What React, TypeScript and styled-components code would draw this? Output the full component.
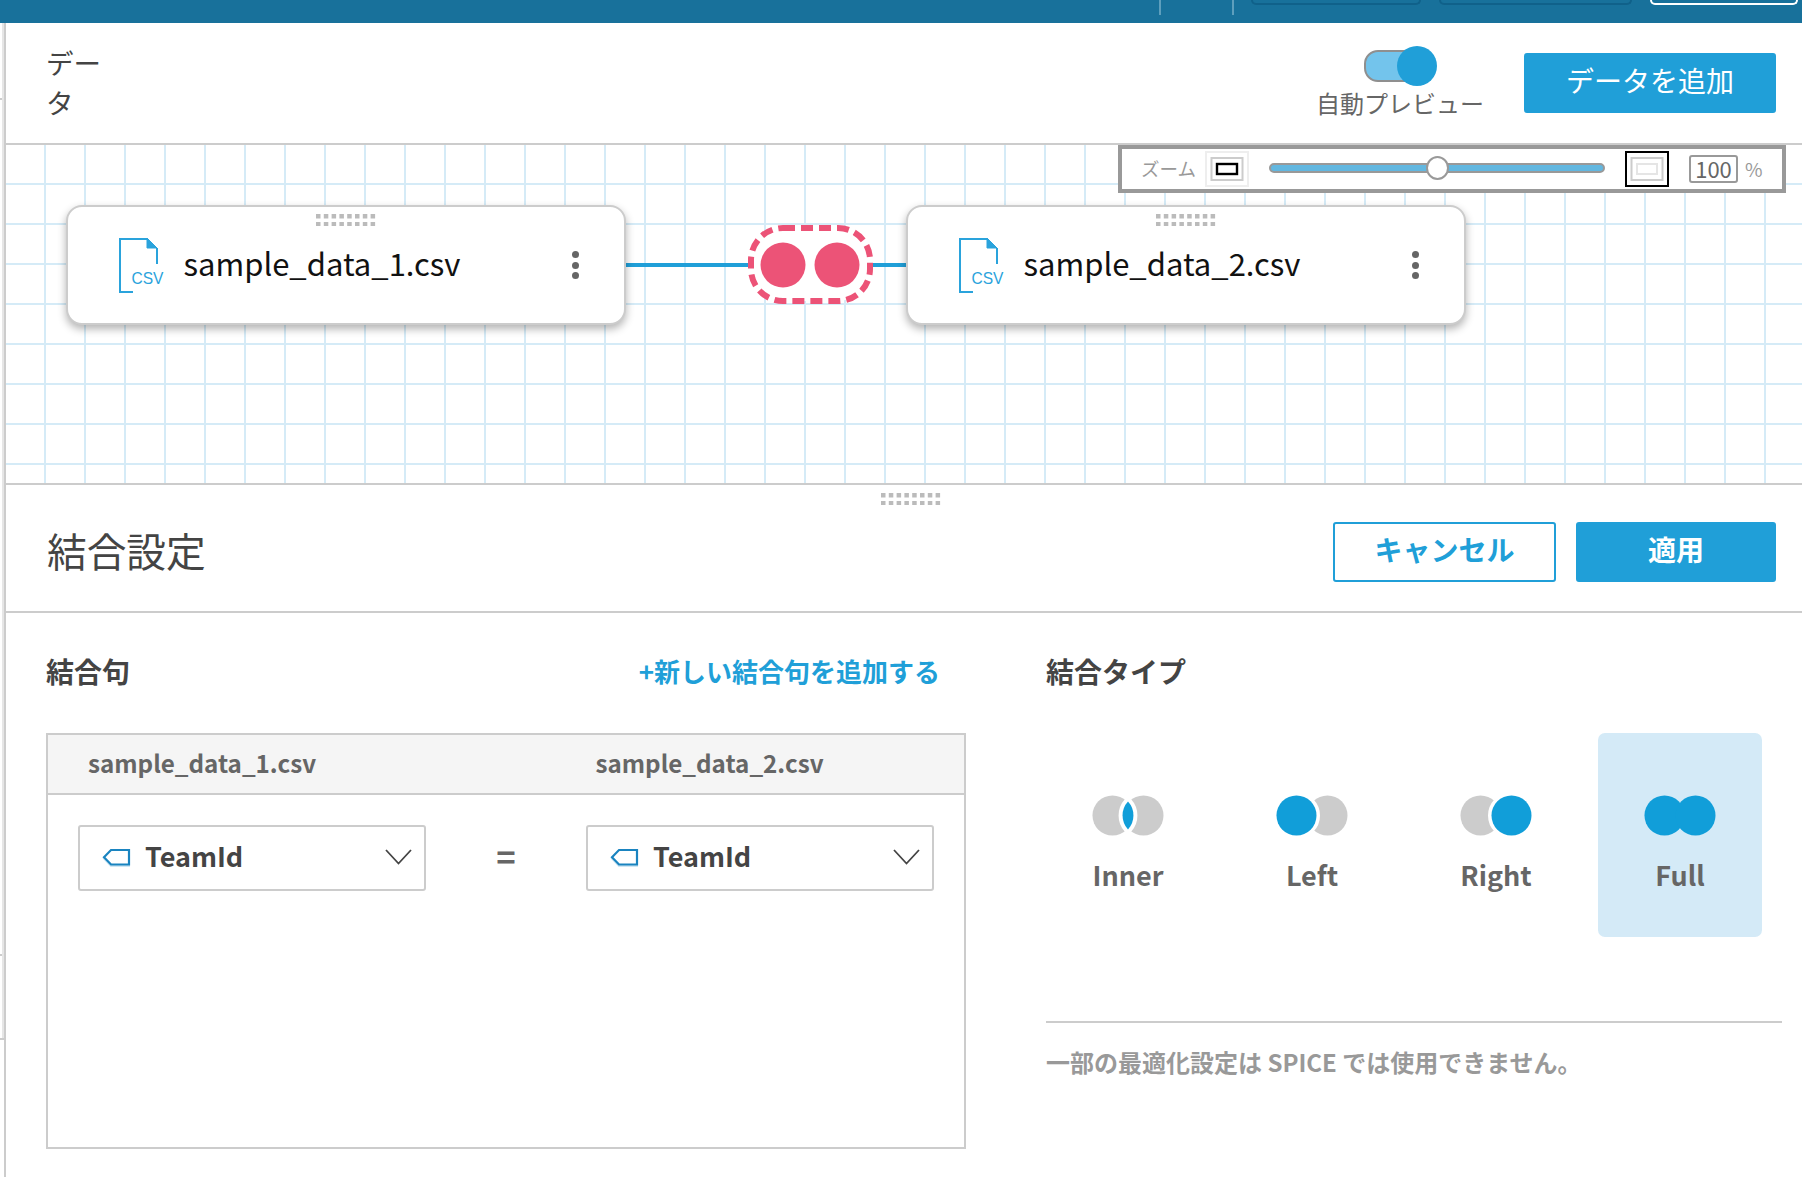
import React from 'react';
import styled, { createGlobalStyle } from 'styled-components';

const Global = createGlobalStyle`
  html, body { margin: 0; padding: 0; background: #fff; overflow: hidden; }
  body { font-family: "Noto Sans CJK JP", "Noto Sans", sans-serif; color: #444; }
  * { box-sizing: border-box; }
`;

const BLUE = '#209fd8';
const LINE = '#cccccc';

const Page = styled.div`
  width: 1802px;
  height: 1177px;
  display: flex;
  flex-direction: column;
  overflow: hidden;
`;

const TopBar = styled.div`
  height: 23px;
  flex: none;
  background: #18719b;
  display: flex;
  align-items: flex-start;
  justify-content: flex-end;
  padding-right: 4px;
`;
const TopDivider = styled.span<{ $right: number }>`
  width: 2px;
  height: 15px;
  background: #5e9fbd;
  margin-right: ${p => p.$right}px;
`;
const TopButton = styled.span<{ $w: number; $gap: number; $light?: boolean }>`
  width: ${p => p.$w}px;
  height: 5px;
  margin-left: ${p => p.$gap}px;
  border: 2px solid ${p => (p.$light ? '#fff' : '#10618a')};
  border-top: none;
  border-radius: 0 0 6px 6px;
`;

const Workspace = styled.div`
  flex: 1;
  min-height: 0;
  display: flex;
`;
const Gutter = styled.div`
  position: relative;
  width: 4px;
  flex: none;
`;
const GutterBand = styled.div`
  width: 2px;
  height: 1017px;
  margin-left: 2px;
  background: #e6e6e6;
`;
const GutterTick = styled.span<{ $top: number; $w: number }>`
  position: absolute;
  left: 0;
  top: ${p => p.$top}px;
  width: ${p => p.$w}px;
  height: 2px;
  background: ${LINE};
`;

const Main = styled.main`
  flex: 1;
  min-width: 0;
  border-left: 2px solid ${LINE};
  display: flex;
  flex-direction: column;
`;

const Header = styled.header`
  height: 122px;
  flex: none;
  display: flex;
  align-items: center;
  justify-content: space-between;
  padding: 0 26px 0 40px;
  border-bottom: 2px solid ${LINE};
`;
const HeaderTitle = styled.h1`
  margin: 0;
  width: 56px;
  padding-bottom: 2px;
  font-size: 27.5px;
  line-height: 40px;
  font-weight: 400;
  color: #444;
`;
const HeaderActions = styled.div`
  display: flex;
  align-items: center;
  gap: 40px;
`;
const ToggleGroup = styled.div`
  display: flex;
  flex-direction: column;
  align-items: center;
  gap: 5px;
  padding-bottom: 5px;
`;
const ToggleTrack = styled.div`
  position: relative;
  width: 73px;
  height: 40px;
  display: flex;
  align-items: center;
  &::before {
    content: '';
    width: 60px;
    height: 28px;
    border-radius: 14px;
    border: 2px solid #8f8f8f;
    background: #73c4ec;
  }
`;
const ToggleKnob = styled.span`
  position: absolute;
  right: 0;
  top: 0;
  width: 40px;
  height: 40px;
  border-radius: 50%;
  background: ${BLUE};
`;
const ToggleLabel = styled.span`
  font-size: 24px;
  line-height: 24px;
  color: #666;
  white-space: nowrap;
`;
const Button = styled.button<{ $variant: 'solid' | 'outline'; $w: number; $bold?: boolean }>`
  width: ${p => p.$w}px;
  height: 60px;
  padding: 0 0 6px;
  border-radius: 3px;
  border: 2px solid ${BLUE};
  background: ${p => (p.$variant === 'solid' ? BLUE : '#fff')};
  color: ${p => (p.$variant === 'solid' ? '#fff' : BLUE)};
  font-family: inherit;
  font-size: 28px;
  font-weight: ${p => (p.$bold ? 700 : 400)};
`;

const Canvas = styled.section`
  position: relative;
  height: 340px;
  flex: none;
  overflow: hidden;
  border-bottom: 2px solid ${LINE};
  background-image:
    linear-gradient(to right, #d5ebf7 2px, transparent 2px),
    linear-gradient(to bottom, #d5ebf7 2px, transparent 2px);
  background-size: 40px 40px;
  background-position: 38px 38px;
`;
const Connector = styled.div`
  position: absolute;
  left: 610px;
  top: 118px;
  width: 295px;
  height: 4px;
  background: ${BLUE};
`;
const JoinBadge = styled.svg`
  position: absolute;
  left: 742px;
  top: 80px;
  width: 125px;
  height: 79px;
`;
const Node = styled.div<{ $left: number }>`
  position: absolute;
  left: ${p => p.$left}px;
  top: 60px;
  width: 560px;
  height: 120px;
  background: #fff;
  border: 2.5px solid ${LINE};
  border-radius: 16px;
  box-shadow: 0 4px 8px rgba(0, 0, 0, 0.3);
  display: flex;
  align-items: center;
  padding: 0 45px 0 51px;
`;
const HandleSlot = styled.div<{ $top: number; $left: number }>`
  position: absolute;
  top: ${p => p.$top}px;
  left: ${p => p.$left}px;
  line-height: 0;
`;
const NodeName = styled.span`
  margin-left: 20px;
  padding-bottom: 4px;
  font-size: 31px;
  line-height: 40px;
  color: #111;
  flex: 1;
`;
const Kebab = styled.div`
  display: flex;
  flex-direction: column;
  gap: 3.5px;
  & > span {
    width: 7px;
    height: 7px;
    border-radius: 50%;
    background: #666;
  }
`;

const ZoomBar = styled.div`
  position: absolute;
  right: 16px;
  top: 0;
  width: 668px;
  height: 48px;
  background: #fff;
  border: 4px solid #999;
  display: flex;
  align-items: center;
  padding-left: 19px;
`;
const ZoomLabel = styled.span`
  width: 54px;
  margin-right: 10px;
  padding-bottom: 3px;
  font-size: 18.5px;
  color: #999;
  white-space: nowrap;
`;
const Slider = styled.div`
  position: relative;
  width: 336px;
  height: 10px;
  margin: -2px 20px 0;
  border-radius: 5px;
  border: 2px solid #999;
  background: #62b7e0;
`;
const SliderThumb = styled.span`
  position: absolute;
  left: 155px;
  top: -9px;
  width: 23px;
  height: 24px;
  border-radius: 50%;
  background: #fff;
  border: 2px solid #999;
`;
const ZoomInput = styled.span`
  width: 49px;
  height: 28px;
  margin-left: 20px;
  padding-bottom: 3px;
  border: 2px solid #999;
  border-radius: 3px;
  display: flex;
  align-items: center;
  justify-content: center;
  font-size: 22px;
  color: #666;
`;
const Percent = styled.span`
  margin-left: 7px;
  padding-bottom: 2px;
  font-size: 19px;
  color: #999;
`;

const Panel = styled.section`
  position: relative;
  flex: 1;
`;
const PanelHead = styled.div`
  height: 128px;
  display: flex;
  align-items: center;
  justify-content: space-between;
  padding: 8px 26px 0 41px;
  border-bottom: 2px solid ${LINE};
`;
const PanelTitle = styled.h2`
  margin: 0;
  padding-bottom: 5px;
  font-size: 39.7px;
  font-weight: 400;
  color: #444;
`;
const PanelActions = styled.div`
  display: flex;
  gap: 20px;
`;
const PanelBody = styled.div`
  display: flex;
  padding: 44px 20px 0 40px;
  gap: 80px;
`;
const LeftCol = styled.div`
  width: 920px;
  flex: none;
`;
const RightCol = styled.div`
  width: 736px;
  flex: none;
`;
const SectionHead = styled.div<{ $pad?: number }>`
  display: flex;
  justify-content: space-between;
  align-items: center;
  height: 28px;
  padding-right: ${p => p.$pad ?? 0}px;
  margin-bottom: 48px;
`;
const SectionTitle = styled.h3`
  margin: 0;
  font-size: 28px;
  line-height: 28px;
  font-weight: 700;
  color: #444;
`;
const AddLink = styled.a`
  font-size: 26px;
  line-height: 28px;
  font-weight: 700;
  color: ${BLUE};
`;
const ClauseTable = styled.div`
  height: 416px;
  border: 2px solid ${LINE};
`;
const ClauseHead = styled.div`
  height: 60px;
  background: #f5f5f5;
  border-bottom: 2px solid ${LINE};
  display: grid;
  grid-template-columns: 507.5px 1fr;
  align-items: center;
  padding: 0 0 4px 40px;
  font-size: 24.2px;
  font-weight: 700;
  color: #666;
`;
const ClauseRow = styled.div`
  display: grid;
  grid-template-columns: 348px 160px 348px;
  align-items: center;
  padding: 30px 0 0 30px;
`;
const Select = styled.div`
  height: 66px;
  border: 2px solid ${LINE};
  border-radius: 3px;
  display: flex;
  align-items: center;
  padding: 0 12px 2px 22px;
  gap: 14px;
`;
const SelectValue = styled.span`
  flex: 1;
  padding-bottom: 4px;
  font-size: 27px;
  font-weight: 700;
  color: #444;
`;
const EqualSign = styled.span`
  text-align: center;
  padding-bottom: 5px;
  font-size: 33px;
  font-weight: 700;
  color: #666;
`;
const TypeGrid = styled.div`
  display: grid;
  grid-template-columns: repeat(4, 164px);
  gap: 20px;
`;
const TypeCard = styled.div<{ $active?: boolean }>`
  height: 204px;
  border-radius: 7px;
  background: ${p => (p.$active ? '#d4eaf7' : 'transparent')};
  display: flex;
  flex-direction: column;
  align-items: center;
  padding-top: 62px;
  gap: 22px;
`;
const TypeLabel = styled.span`
  font-size: 27px;
  line-height: 34px;
  font-weight: 700;
  color: #666;
`;
const Rule = styled.hr`
  margin: 84px 0 23px;
  border: none;
  height: 2px;
  background: ${LINE};
`;
const Note = styled.p`
  margin: 0;
  font-size: 24px;
  line-height: 32px;
  font-weight: 700;
  color: #999;
`;

const DragHandle = () => (
  <svg width="61" height="12" viewBox="0 0 61 12">
    {[0, 8].map(y =>
      [0, 1, 2, 3, 4, 5, 6, 7].map(i => (
        <rect key={`${y}-${i}`} x={i * 7.8} y={y} width="4.5" height="4.5" fill="#bbb" />
      ))
    )}
  </svg>
);

const CsvIcon = () => (
  <svg width="49" height="55" viewBox="0 0 49 55" style={{ flex: 'none', marginRight: -4 }}>
    <path d="M14 54H1V1H28" fill="none" stroke="#2aa3dc" strokeWidth="2" />
    <path d="M28 0L38 10H28Z" fill="#2aa3dc" stroke="#2aa3dc" strokeWidth="1" />
    <path d="M38 10V26" fill="none" stroke="#2aa3dc" strokeWidth="2" />
    <text
      x="12.5"
      y="45.5"
      fontFamily="'Liberation Sans', sans-serif"
      fontSize="17"
      textLength="32"
      lengthAdjust="spacingAndGlyphs"
      fill="#2aa3dc"
    >
      CSV
    </text>
  </svg>
);

const TagIcon = () => (
  <svg width="29" height="19" viewBox="0 0 29 19" style={{ flex: 'none' }}>
    <path d="M9 3H27V18H9L2 10.5Z" fill="none" stroke="#cfe6f3" strokeWidth="2" />
    <path d="M9 2H27V16.5H9L2 9.2Z" fill="#fff" stroke="#1a84c0" strokeWidth="2.2" />
  </svg>
);

const Chevron = () => (
  <svg width="27" height="16" viewBox="0 0 27 16" style={{ flex: 'none' }}>
    <path d="M1 1L13.5 14.5L26 1" fill="none" stroke="#444" strokeWidth="1.8" />
  </svg>
);

const ZoomIcon = ({ large }: { large?: boolean }) => (
  <svg width="44" height="36" viewBox="0 0 44 36" style={{ flex: 'none' }}>
    <rect x="1" y="1" width="42" height="34" fill="#fff" stroke={large ? '#000' : '#eee'} strokeWidth="2" />
    <rect x="6.5" y="7" width="31" height="22" fill="none" stroke="#ccc" strokeWidth="2" />
    {large ? (
      <rect x="12" y="13" width="20" height="10" fill="none" stroke="#e5e5e5" strokeWidth="2" />
    ) : (
      <rect x="12" y="13" width="20" height="10" fill="none" stroke="#000" strokeWidth="2.4" />
    )}
  </svg>
);

const VENN_BLUE = '#119ed9';
const VENN_GREY = '#ccc';
const LENS = 'M36 6.6A20.5 20.5 0 0 1 36 34.4A20.5 20.5 0 0 1 36 6.6Z';

const Venn = ({ kind }: { kind: 'Inner' | 'Left' | 'Right' | 'Full' }) => (
  <svg width="72" height="41" viewBox="0 0 72 41">
    {kind === 'Inner' && (
      <>
        <circle cx="20.5" cy="20.5" r="20" fill={VENN_GREY} />
        <circle cx="51.5" cy="20.5" r="20" fill={VENN_GREY} />
        <path d={LENS} fill={VENN_BLUE} stroke="#fff" strokeWidth="8" style={{ paintOrder: 'stroke' }} />
      </>
    )}
    {kind === 'Left' && (
      <>
        <circle cx="51.5" cy="20.5" r="20" fill={VENN_GREY} />
        <circle cx="20.5" cy="20.5" r="20" fill={VENN_BLUE} stroke="#fff" strokeWidth="7" style={{ paintOrder: 'stroke' }} />
      </>
    )}
    {kind === 'Right' && (
      <>
        <circle cx="20.5" cy="20.5" r="20" fill={VENN_GREY} />
        <circle cx="51.5" cy="20.5" r="20" fill={VENN_BLUE} stroke="#fff" strokeWidth="7" style={{ paintOrder: 'stroke' }} />
      </>
    )}
    {kind === 'Full' && (
      <>
        <circle cx="20.5" cy="20.5" r="20" fill={VENN_BLUE} />
        <circle cx="51.5" cy="20.5" r="20" fill={VENN_BLUE} />
      </>
    )}
  </svg>
);

const JOIN_TYPES = ['Inner', 'Left', 'Right', 'Full'] as const;

const FlowNode = ({ left, name }: { left: number; name: string }) => (
  <Node $left={left}>
    <HandleSlot $top={7} $left={248}>
      <DragHandle />
    </HandleSlot>
    <CsvIcon />
    <NodeName>{name}</NodeName>
    <Kebab>
      <span />
      <span />
      <span />
    </Kebab>
  </Node>
);

const FieldSelect = () => (
  <Select>
    <TagIcon />
    <SelectValue>TeamId</SelectValue>
    <Chevron />
  </Select>
);

export default function App() {
  return (
    <Page>
      <Global />
      <TopBar>
        <TopDivider $right={71} />
        <TopDivider $right={0} />
        <TopButton $w={170} $gap={17} />
        <TopButton $w={193} $gap={18} />
        <TopButton $w={148} $gap={18} $light />
      </TopBar>
      <Workspace>
        <Gutter>
          <GutterBand />
          <GutterTick $top={75} $w={2} />
          <GutterTick $top={931} $w={2} />
          <GutterTick $top={1015} $w={4} />
        </Gutter>
        <Main>
          <Header>
            <HeaderTitle>データ</HeaderTitle>
            <HeaderActions>
              <ToggleGroup>
                <ToggleTrack>
                  <ToggleKnob />
                </ToggleTrack>
                <ToggleLabel>自動プレビュー</ToggleLabel>
              </ToggleGroup>
              <Button $variant="solid" $w={252}>データを追加</Button>
            </HeaderActions>
          </Header>
          <Canvas>
            <Connector />
            <JoinBadge viewBox="0 0 125 79">
              <rect x="3" y="3" width="119" height="73" rx="32" fill="#fff" stroke="#ec5377" strokeWidth="6" strokeDasharray="12 6" />
              <circle cx="35" cy="40" r="22.5" fill="#ec5377" />
              <circle cx="89" cy="40" r="22.5" fill="#ec5377" />
            </JoinBadge>
            <FlowNode left={59.5} name="sample_data_1.csv" />
            <FlowNode left={899.5} name="sample_data_2.csv" />
            <ZoomBar>
              <ZoomLabel>ズーム</ZoomLabel>
              <ZoomIcon />
              <Slider>
                <SliderThumb />
              </Slider>
              <ZoomIcon large />
              <ZoomInput>100</ZoomInput>
              <Percent>%</Percent>
            </ZoomBar>
          </Canvas>
          <Panel>
            <HandleSlot $top={8} $left={875}>
              <DragHandle />
            </HandleSlot>
            <PanelHead>
              <PanelTitle>結合設定</PanelTitle>
              <PanelActions>
                <Button $variant="outline" $w={223} $bold>キャンセル</Button>
                <Button $variant="solid" $w={200} $bold>適用</Button>
              </PanelActions>
            </PanelHead>
            <PanelBody>
              <LeftCol>
                <SectionHead $pad={26}>
                  <SectionTitle>結合句</SectionTitle>
                  <AddLink>+新しい結合句を追加する</AddLink>
                </SectionHead>
                <ClauseTable>
                  <ClauseHead>
                    <span>sample_data_1.csv</span>
                    <span>sample_data_2.csv</span>
                  </ClauseHead>
                  <ClauseRow>
                    <FieldSelect />
                    <EqualSign>=</EqualSign>
                    <FieldSelect />
                  </ClauseRow>
                </ClauseTable>
              </LeftCol>
              <RightCol>
                <SectionHead>
                  <SectionTitle>結合タイプ</SectionTitle>
                </SectionHead>
                <TypeGrid>
                  {JOIN_TYPES.map(t => (
                    <TypeCard key={t} $active={t === 'Full'}>
                      <Venn kind={t} />
                      <TypeLabel>{t}</TypeLabel>
                    </TypeCard>
                  ))}
                </TypeGrid>
                <Rule />
                <Note>一部の最適化設定は SPICE では使用できません。</Note>
              </RightCol>
            </PanelBody>
          </Panel>
        </Main>
      </Workspace>
    </Page>
  );
}
